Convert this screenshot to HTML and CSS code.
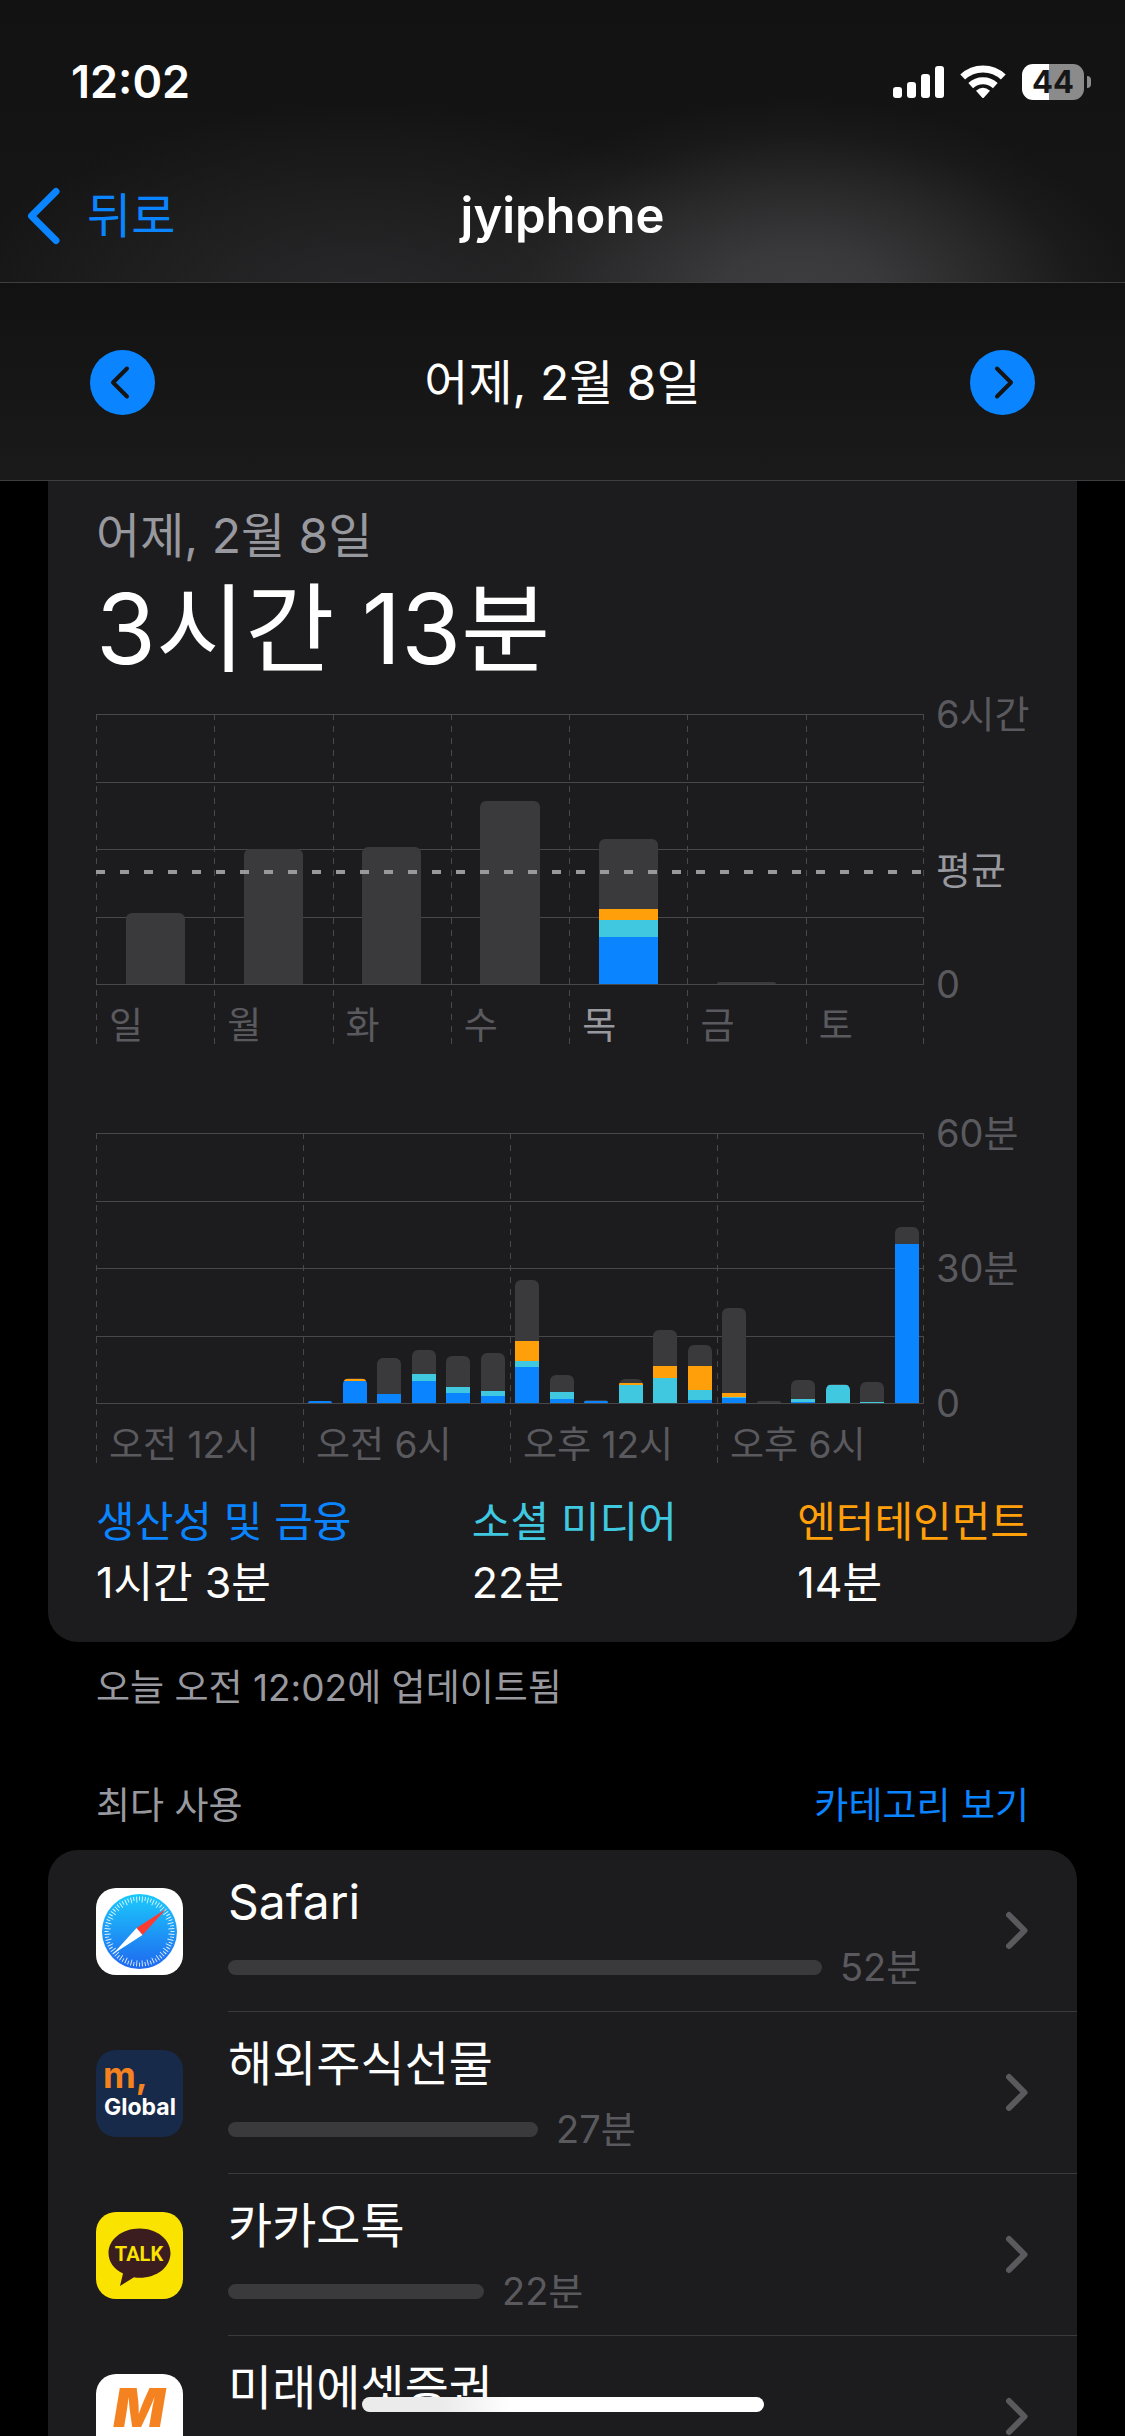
FILE: index.html
```html
<!DOCTYPE html>
<html lang="ko">
<head>
<meta charset="utf-8">
<meta name="viewport" content="width=device-width, initial-scale=1">
<title>jyiphone</title>
<link rel="stylesheet" href="styles.css">
</head>
<body>
<div class="app">
  <header class="top">
    <div class="chrome">
      <div class="status">
        <span class="clock">12:02</span>
        <div class="indicators">
          <svg class="signal" width="51" height="32" viewBox="0 0 51 32" fill="#fff" aria-hidden="true"><rect y="21" width="9" height="11" rx="3"/><rect x="14" y="16" width="9" height="16" rx="3"/><rect x="28" y="8" width="9" height="24" rx="3"/><rect x="42" width="9" height="32" rx="3"/></svg>
          <svg width="46" height="34" viewBox="0 0 46 34" aria-hidden="true"><g fill="none" stroke="#fff" stroke-width="7"><path d="M2.7 12A29.5 29.5 0 0 1 43.3 12"/><path d="M10.7 20.6A18.2 18.2 0 0 1 35.3 20.6"/></g><path d="M16 25.8Q23 19.6 30 25.8L24 32.4Q23 33.4 22 32.4Z" fill="#fff"/></svg>
          <div class="battery"><span class="cell">44</span><span class="nub"></span></div>
        </div>
      </div>
      <nav class="nav">
        <a class="back" href="#"><svg width="34" height="58" viewBox="0 0 34 58" fill="none" stroke="currentColor" stroke-width="7" stroke-linecap="round" stroke-linejoin="round" aria-hidden="true"><path d="M29 4.5L4.5 29 29 53.5"/></svg><span>뒤로</span></a>
        <h1 class="title">jyiphone</h1>
        <span></span>
      </nav>
    </div>
    <div class="days">
      <button class="step" type="button" aria-label="이전 날"><svg width="65" height="65" viewBox="0 0 65 65" aria-hidden="true"><path d="M37 18.500L23 32.500 37 46.500"/></svg></button>
      <span class="date">어제, 2월 8일</span>
      <button class="step" type="button" aria-label="다음 날"><svg width="65" height="65" viewBox="0 0 65 65" aria-hidden="true"><path d="M27 18.500L41 32.500 27 46.500"/></svg></button>
    </div>
  </header>

  <main class="content">
    <section class="card summary">
      <p class="subtitle">어제, 2월 8일</p>
      <p class="total">3시간 13분</p>

      <div class="chart">
        <div class="plot">
          <div class="lines"><i></i><i></i><i></i><i></i></div>
          <div class="col"><div class="bars"><div class="bar"><i style="height:71px"></i></div></div><span>일</span></div>
          <div class="col"><div class="bars"><div class="bar"><i style="height:135px"></i></div></div><span>월</span></div>
          <div class="col"><div class="bars"><div class="bar"><i style="height:137px"></i></div></div><span>화</span></div>
          <div class="col"><div class="bars"><div class="bar"><i style="height:183px"></i></div></div><span>수</span></div>
          <div class="col"><div class="bars"><div class="bar"><i style="height:70px"></i><i class="fun" style="height:11px"></i><i class="social" style="height:17px"></i><i class="work" style="height:47px"></i></div></div><span class="on">목</span></div>
          <div class="col"><div class="bars"><div class="bar"><i style="height:2px"></i></div></div><span>금</span></div>
          <div class="col"><div class="bars"></div><span>토</span></div>
          <div class="average"></div>
        </div>
        <div class="axis week"><span>6시간</span><span class="on">평균</span><span>0</span></div>
      </div>

      <div class="chart hourly">
        <div class="plot">
          <div class="lines"><i></i><i></i><i></i><i></i></div>
          <div class="col"><div class="bars"></div><span>오전 12시</span></div>
          <div class="col"><div class="bars">
            <div class="bar"><i class="work" style="height:2px"></i></div>
            <div class="bar"><i style="height:1px"></i><i class="fun" style="height:2px"></i><i class="work" style="height:22px"></i></div>
            <div class="bar"><i style="height:36px"></i><i class="work" style="height:9px"></i></div>
            <div class="bar"><i style="height:24px"></i><i class="social" style="height:7px"></i><i class="work" style="height:22px"></i></div>
            <div class="bar"><i style="height:31px"></i><i class="social" style="height:6px"></i><i class="work" style="height:10px"></i></div>
            <div class="bar"><i style="height:38px"></i><i class="social" style="height:5px"></i><i class="work" style="height:7px"></i></div>
          </div><span>오전 6시</span></div>
          <div class="col"><div class="bars">
            <div class="bar"><i style="height:61px"></i><i class="fun" style="height:20px"></i><i class="social" style="height:6px"></i><i class="work" style="height:36px"></i></div>
            <div class="bar"><i style="height:17px"></i><i class="social" style="height:7px"></i><i class="work" style="height:4px"></i></div>
            <div class="bar"><i style="height:1px"></i><i class="work" style="height:2px"></i></div>
            <div class="bar"><i style="height:4px"></i><i class="fun" style="height:2px"></i><i class="social" style="height:18px"></i></div>
            <div class="bar"><i style="height:36px"></i><i class="fun" style="height:12px"></i><i class="social" style="height:25px"></i></div>
            <div class="bar"><i style="height:21px"></i><i class="fun" style="height:24px"></i><i class="social" style="height:10px"></i><i class="work" style="height:3px"></i></div>
          </div><span>오후 12시</span></div>
          <div class="col"><div class="bars">
            <div class="bar"><i style="height:85px"></i><i class="fun" style="height:4px"></i><i class="social" style="height:1px"></i><i class="work" style="height:5px"></i></div>
            <div class="bar"><i style="height:2px"></i></div>
            <div class="bar"><i style="height:19px"></i><i class="social" style="height:3px"></i><i class="work" style="height:1px"></i></div>
            <div class="bar"><i style="height:1px"></i><i class="social" style="height:18px"></i></div>
            <div class="bar"><i style="height:20px"></i><i class="social" style="height:1px"></i></div>
            <div class="bar"><i style="height:17px"></i><i class="work" style="height:159px"></i></div>
          </div><span>오후 6시</span></div>
        </div>
        <div class="axis"><span>60분</span><span>30분</span><span>0</span></div>
      </div>

      <dl class="legend">
        <div><dt class="work-text">생산성 및 금융</dt><dd>1시간 3분</dd></div>
        <div><dt class="social-text">소셜 미디어</dt><dd>22분</dd></div>
        <div><dt class="fun-text">엔터테인먼트</dt><dd>14분</dd></div>
      </dl>
    </section>
    <p class="updated">오늘 오전 12:02에 업데이트됨</p>

    <div class="section-head"><h2>최다 사용</h2><a href="#">카테고리 보기</a></div>
    <ul class="card apps">
      <li><a class="app-row" href="#">
        <svg class="icon" viewBox="0 0 87 87" aria-hidden="true">
          <defs><linearGradient id="sea" x2="0" y2="1"><stop stop-color="#1bcafb"/><stop offset="1" stop-color="#1f68f0"/></linearGradient></defs>
          <rect width="87" height="87" rx="20" fill="#fff"/>
          <circle cx="43.500" cy="43.500" r="37.500" fill="url(#sea)"/>
          <circle cx="43.500" cy="43.500" r="33" fill="none" stroke="#fff" stroke-opacity=".85" stroke-width="4" pathLength="216" stroke-dasharray="1 5" stroke-dashoffset=".5"/>
          <circle cx="43.500" cy="43.500" r="32" fill="none" stroke="#fff" stroke-opacity=".85" stroke-width="6" pathLength="216" stroke-dasharray="1 5" stroke-dashoffset="3.500"/>
          <path d="M70 21L40.500 40 46.500 47Z" fill="#ff3b30"/><path d="M17 66L40.500 40 46.500 47Z" fill="#fff"/>
        </svg>
        <div class="info"><span class="name">Safari</span><div class="usage"><i style="width:594px"></i><span>52분</span></div></div>
        <svg class="chev" viewBox="0 0 22 37" aria-hidden="true"><path d="M3 3L18.500 18.500 3 34"/></svg>
      </a></li>
      <li><a class="app-row" href="#">
        <svg class="icon" viewBox="0 0 87 87" aria-hidden="true">
          <rect width="87" height="87" rx="20" fill="#172a49"/>
          <text x="7" y="38" class="logo-m">m,</text><text x="8" y="65" class="logo-global">Global</text>
        </svg>
        <div class="info"><span class="name">해외주식선물</span><div class="usage"><i style="width:310px"></i><span>27분</span></div></div>
        <svg class="chev" viewBox="0 0 22 37" aria-hidden="true"><path d="M3 3L18.500 18.500 3 34"/></svg>
      </a></li>
      <li><a class="app-row" href="#">
        <svg class="icon" viewBox="0 0 87 87" aria-hidden="true">
          <rect width="87" height="87" rx="20" fill="#fbe300"/>
          <path d="M43.500 16.500C26 16.500 12.500 27.500 12.500 41C12.500 50 18 57 27 61.500L24 74L38 65.300Q40.500 65.800 43.500 65.800C61 65.800 74.500 55 74.500 41C74.500 27.500 61 16.500 43.500 16.500Z" fill="#3b1d20"/>
          <text x="43" y="49" text-anchor="middle" class="logo-talk">TALK</text>
        </svg>
        <div class="info"><span class="name">카카오톡</span><div class="usage"><i style="width:256px"></i><span>22분</span></div></div>
        <svg class="chev" viewBox="0 0 22 37" aria-hidden="true"><path d="M3 3L18.500 18.500 3 34"/></svg>
      </a></li>
      <li><a class="app-row" href="#">
        <svg class="icon" viewBox="0 0 87 87" aria-hidden="true">
          <defs><clipPath id="tile"><rect width="87" height="87" rx="20"/></clipPath></defs>
          <g clip-path="url(#tile)"><rect width="87" height="87" fill="#fff"/><rect y="62" width="87" height="25" fill="#6f93b0"/></g>
          <text x="43" y="53" text-anchor="middle" class="logo-mirae">M</text>
        </svg>
        <div class="info"><span class="name">미래에셋증권</span></div>
        <svg class="chev" viewBox="0 0 22 37" aria-hidden="true"><path d="M3 3L18.500 18.500 3 34"/></svg>
      </a></li>
    </ul>
  </main>
  <div class="home-bar"></div>
</div>
</body>
</html>
```

FILE: styles.css
```css
:root {
  --blue: #0a84ff;
  --teal: #40c8e0;
  --orange: #ff9f0a;
  --card: #1c1c1e;
  --bar: #3a3a3c;
  --line: #48484a;
  --muted: #98989f;
  --dim: #5a5a5e;
}

* { box-sizing: border-box; }

body, p, h1, h2, ul, dl, dd { margin: 0; padding: 0; }

body {
  background: #000;
  color: #fff;
  font-family: Inter, "Noto Sans CJK KR", sans-serif;
  font-size: 37px;
  line-height: 48px;
}

a { color: var(--blue); text-decoration: none; }
ul { list-style: none; }
i { display: block; }

.app {
  position: relative;
  display: flex;
  flex-direction: column;
  height: 100vh;
  overflow: hidden;
}

/* Header */
.top { flex: none; }

.chrome {
  border-bottom: 1px solid #3e3e40;
  background:
    radial-gradient(ellipse 30% 200px at 71% 106%, #3e3e40, #3e3e40e0 25%, #3e3e4080 55%, #3e3e4020 82%, #3e3e4000),
    radial-gradient(ellipse 36% 200px at 32% 108%, #29292b, #29292b00),
    linear-gradient(#121212, #161616);
}

.status {
  display: flex;
  align-items: center;
  justify-content: space-between;
  height: 164px;
  padding: 0 34px 0 71px;
}

.clock { font-size: 45px; font-weight: 600; }

.indicators { display: flex; align-items: center; gap: 16px; }

.battery { display: flex; align-items: center; gap: 3px; }

.cell {
  width: 62px;
  height: 36px;
  border-radius: 11px;
  background: linear-gradient(90deg, #fff 27px, #8b8b8b 27px);
  color: #161616;
  font-size: 31px;
  font-weight: 700;
  line-height: 36px;
  text-align: center;
}

.nub {
  width: 4px;
  height: 12px;
  border-radius: 0 6px 6px 0;
  background: #8b8b8b;
}

.nav {
  display: grid;
  grid-template-columns: 1fr auto 1fr;
  align-items: center;
  height: 118px;
  padding: 0 27px 14px;
  font-size: 48px;
  line-height: 60px;
}

.back { display: flex; align-items: center; gap: 26px; }
.title { font-size: 49px; font-weight: 600; }

.days {
  display: flex;
  align-items: center;
  justify-content: space-between;
  height: 198px;
  padding: 2px 90px 0;
  border-bottom: 1px solid #3e3e40;
  background: linear-gradient(#121212, #1a1a1b);
}

.date { font-size: 48px; line-height: 60px; }

.step {
  width: 65px;
  height: 65px;
  padding: 0;
  border: 0;
  border-radius: 50%;
  background: var(--blue);
}

.step svg {
  display: block;
  fill: none;
  stroke: #151515;
  stroke-width: 4;
  stroke-linecap: round;
  stroke-linejoin: round;
}

/* Content */
.content {
  flex: 1;
  min-height: 0;
  padding: 0 48px;
  overflow-y: auto;
  scrollbar-width: none;
}

.card { background: var(--card); border-radius: 30px; }

.summary {
  padding: 25px 48px 30px;
  border-radius: 0 0 30px 30px;
}

.subtitle { color: var(--muted); font-size: 48px; line-height: 60px; }

.total {
  margin-bottom: 22px;
  font-size: 97px;
  line-height: 126px;
}

/* Charts */
.chart {
  display: grid;
  grid-template-columns: 1fr 105px;
  color: var(--dim);
}

.hourly { margin-top: 89px; }

.plot {
  position: relative;
  display: flex;
  background: repeating-linear-gradient(var(--line) 0 6px, transparent 6px 12px) right / 1px 100% no-repeat;
}

.lines {
  position: absolute;
  inset: 0 0 auto;
  display: grid;
  grid-template-rows: repeat(4, 1fr);
  height: 271px;
  border-bottom: 1px solid var(--line);
}

.lines i { border-top: 1px solid var(--line); }

.col {
  position: relative;
  flex: 1;
  height: 330px;
  background: repeating-linear-gradient(var(--line) 0 6px, transparent 6px 12px) left / 1px 100% no-repeat;
}

.col > span { display: block; padding: 18px 0 0 13px; white-space: nowrap; }

.bars {
  display: flex;
  align-items: flex-end;
  justify-content: space-around;
  height: 270px;
}

.bar {
  width: 50%;
  overflow: hidden;
  border-radius: 6px 6px 0 0;
}

.hourly .bar { width: 24px; }

.bar i { background: var(--bar); }
.bar .work { background: var(--blue); }
.bar .social { background: var(--teal); }
.bar .fun { background: var(--orange); }

.average {
  position: absolute;
  top: 156px;
  left: 0;
  right: 0;
  height: 4px;
  background: repeating-linear-gradient(90deg, #98989d 0 9px, transparent 9px 24px);
}

.axis {
  display: grid;
  grid-template-rows: 135px 135px 48px;
  align-content: start;
  margin-top: -24px;
  padding-left: 12px;
  font-size: 38px;
  white-space: nowrap;
}

.week { grid-template-rows: 156px 114px 48px; }
.on { color: var(--muted); }

.legend {
  display: flex;
  justify-content: space-between;
  margin-top: 29px;
  font-size: 43px;
  line-height: 60px;
}

.legend dt { font-size: 42px; }

.work-text { color: var(--blue); }
.social-text { color: var(--teal); }
.fun-text { color: var(--orange); }

.updated { padding: 22px 48px 0; color: var(--muted); }

.section-head {
  display: flex;
  justify-content: space-between;
  padding: 70px 48px 20px;
}

.section-head h2 {
  color: var(--muted);
  font-size: 37px;
  font-weight: 400;
}

/* App list */
.app-row {
  display: flex;
  align-items: center;
  height: 162px;
  padding-left: 48px;
  color: #fff;
}

.icon { flex: none; width: 87px; height: 87px; margin-right: 45px; }

.info {
  flex: 1;
  height: 162px;
  padding-top: 22px;
  border-bottom: 1px solid var(--bar);
}

.name { display: block; font-size: 48px; line-height: 60px; }

.usage {
  display: flex;
  align-items: center;
  gap: 18px;
  margin-top: 11px;
  color: var(--dim);
  font-size: 38px;
}

.usage i {
  height: 15px;
  border-radius: 8px;
  background: var(--bar);
}

.app-row .chev {
  width: 71px;
  height: 162px;
  padding-right: 49px;
  border-bottom: 1px solid var(--bar);
  fill: none;
  stroke: var(--dim);
  stroke-width: 6;
  stroke-linecap: round;
  stroke-linejoin: round;
}

.logo-m { font-size: 36px; font-weight: 700; fill: #f58220; }
.logo-global { font-size: 23px; font-weight: 700; fill: #fff; }
.logo-talk { font-family: Roboto, sans-serif; font-size: 20px; font-weight: 700; fill: #fbe300; }
.logo-mirae { font-size: 54px; font-weight: 900; font-style: italic; fill: #f58220; }

.home-bar {
  position: absolute;
  bottom: 24px;
  left: 50%;
  width: 402px;
  height: 15px;
  margin-left: -201px;
  border-radius: 8px;
  background: linear-gradient(90deg, #ebebeb 80px, #fff 150px);
}
```
